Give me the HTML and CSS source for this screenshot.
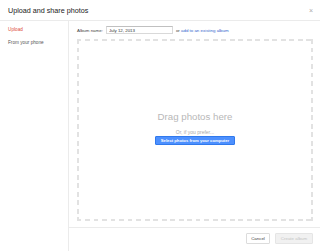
FILE: index.html
```html
<!DOCTYPE html>
<html>
<head>
    <title>Upload and share photos</title>
    <link rel="stylesheet" href="styles.css">
</head>
<body>
    <div class="dialog">
        <div class="header">
            <span class="title">Upload and share photos</span>
            <span class="close">&times;</span>
        </div>
        <div class="main">
            <div class="sidebar">
                <div class="nav-item active">Upload</div>
                <div class="nav-item">From your phone</div>
            </div>
            <div class="content">
                <div class="upload-area">
                    <div class="album-row">
                        <label class="album-label">Album name:</label>
                        <input class="album-input" type="text" value="July 12, 2013">
                        <span class="album-or">or <a href="#">add to an existing album</a></span>
                    </div>
                    <div class="drop-zone">
                        <div class="drop-title">Drag photos here</div>
                        <div class="drop-or">Or, if you prefer...</div>
                        <button class="btn-select">Select photos from your computer</button>
                    </div>
                </div>
                <div class="footer">
                    <button class="btn btn-cancel">Cancel</button>
                    <button class="btn btn-create" disabled>Create album</button>
                </div>
            </div>
        </div>
    </div>
</body>
</html>
```

FILE: styles.css
```css
body {
    margin: 0;
    padding: 0;
    font-family: 'Liberation Sans', Arial, sans-serif;
    background: #fff;
    color: #333;
}

.dialog {
    width: 320px;
    height: 251px;
    display: flex;
    flex-direction: column;
    overflow: hidden;
}

.header {
    height: 20px;
    border-bottom: 1px solid #ebebeb;
    display: flex;
    align-items: center;
    justify-content: space-between;
    padding: 0 8px;
}

.title {
    font-size: 7.2px;
    color: #222;
}

.close {
    font-size: 7px;
    color: #aaa;
    margin-right: -1px;
}

.main {
    flex: 1;
    display: flex;
}

.sidebar {
    width: 68px;
    border-right: 1px solid #ebebeb;
    padding-top: 1.5px;
}

.nav-item {
    font-size: 4.7px;
    line-height: 13px;
    padding-left: 8px;
    color: #555;
}

.nav-item.active {
    color: #dd4b39;
}

.content {
    flex: 1;
    display: flex;
    flex-direction: column;
}

.upload-area {
    padding: 5px 7px 0 8px;
}

.album-row {
    height: 8px;
    display: flex;
    align-items: center;
    gap: 3px;
    font-size: 4.4px;
    color: #444;
    margin-bottom: 5px;
}

.album-input {
    width: 67px;
    height: 8px;
    box-sizing: border-box;
    border: 1px solid #d9d9d9;
    border-top-color: #c0c0c0;
    padding: 0 2px;
    font-family: inherit;
    font-size: 4.4px;
    color: #333;
    margin: 0;
}

.album-or a {
    color: #3366cc;
    text-decoration: none;
}

/* dashed frame drawn with gradients so the dash length matches */
.drop-zone {
    height: 182px;
    box-sizing: border-box;
    padding: 2px 2px 7px 2px;
    background:
        repeating-linear-gradient(to right, #e2e2e2 0 4.5px, transparent 4.5px 8.5px) left top / 100% 2px no-repeat,
        repeating-linear-gradient(to right, #e2e2e2 0 4.5px, transparent 4.5px 8.5px) left bottom / 100% 2px no-repeat,
        repeating-linear-gradient(to bottom, #e2e2e2 0 4.5px, transparent 4.5px 8.5px) left top / 2px 100% no-repeat,
        repeating-linear-gradient(to bottom, #e2e2e2 0 4.5px, transparent 4.5px 8.5px) right top / 2px 100% no-repeat;
    display: flex;
    flex-direction: column;
    align-items: center;
    justify-content: center;
}

.drop-title {
    font-size: 9.7px;
    line-height: 12px;
    color: #b8b8b8;
}

.drop-or {
    font-size: 5px;
    line-height: 6px;
    color: #aaa;
    margin-top: 6px;
}

.btn-select {
    margin-top: 1px;
    width: 80px;
    height: 9px;
    padding: 0;
    border: 1px solid #3079ed;
    background: #4d90fe;
    color: #fff;
    font-family: inherit;
    font-weight: bold;
    font-size: 4.2px;
    border-radius: 1px;
}

.footer {
    margin-top: 6px;
    border-top: 1px solid #ebebeb;
    padding: 5px 7px 0 0;
    display: flex;
    justify-content: flex-end;
    gap: 5px;
}

.btn {
    height: 11px;
    padding: 0;
    font-family: inherit;
    font-size: 4.4px;
    border-radius: 1px;
}

.btn-cancel {
    width: 24px;
    background: #fff;
    border: 1px solid #dcdcdc;
    color: #444;
}

.btn-create {
    width: 38px;
    background: #f1f1f1;
    border: 1px solid #e5e5e5;
    color: #c4c4c4;
}
```
